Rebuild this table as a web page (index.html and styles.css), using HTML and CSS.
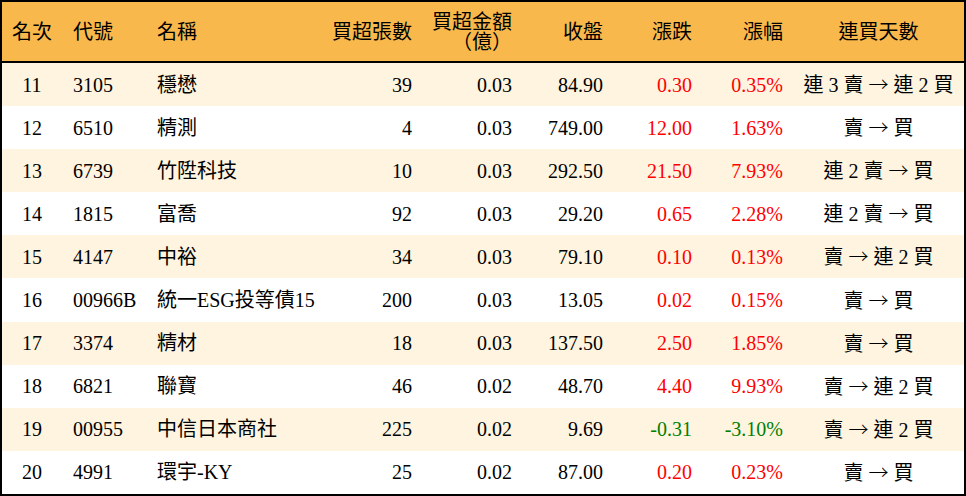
FILE: index.html
```html
<!DOCTYPE html>
<html lang="zh-Hant">
<head>
<meta charset="utf-8">
<title>買超排行</title>
<link rel="stylesheet" href="styles.css">
</head>
<body>
<div class="table">
  <div class="row head">
    <div class="c c1 center">名次</div>
    <div class="c c2">代號</div>
    <div class="c c3">名稱</div>
    <div class="c c4 right">買超張數</div>
    <div class="c c5 right two">買超金額<br>（億）</div>
    <div class="c c6 right">收盤</div>
    <div class="c c7 right">漲跌</div>
    <div class="c c8 right">漲幅</div>
    <div class="c c9 center">連買天數</div>
  </div>
  <div class="row alt">
    <div class="c c1 center">11</div><div class="c c2">3105</div><div class="c c3">穩懋</div>
    <div class="c c4 right">39</div><div class="c c5 right">0.03</div><div class="c c6 right">84.90</div>
    <div class="c c7 right up">0.30</div><div class="c c8 right up">0.35%</div><div class="c c9 center">連 3 賣 <span class="arr">→</span> 連 2 買</div>
  </div>
  <div class="row">
    <div class="c c1 center">12</div><div class="c c2">6510</div><div class="c c3">精測</div>
    <div class="c c4 right">4</div><div class="c c5 right">0.03</div><div class="c c6 right">749.00</div>
    <div class="c c7 right up">12.00</div><div class="c c8 right up">1.63%</div><div class="c c9 center">賣 <span class="arr">→</span> 買</div>
  </div>
  <div class="row alt">
    <div class="c c1 center">13</div><div class="c c2">6739</div><div class="c c3">竹陞科技</div>
    <div class="c c4 right">10</div><div class="c c5 right">0.03</div><div class="c c6 right">292.50</div>
    <div class="c c7 right up">21.50</div><div class="c c8 right up">7.93%</div><div class="c c9 center">連 2 賣 <span class="arr">→</span> 買</div>
  </div>
  <div class="row">
    <div class="c c1 center">14</div><div class="c c2">1815</div><div class="c c3">富喬</div>
    <div class="c c4 right">92</div><div class="c c5 right">0.03</div><div class="c c6 right">29.20</div>
    <div class="c c7 right up">0.65</div><div class="c c8 right up">2.28%</div><div class="c c9 center">連 2 賣 <span class="arr">→</span> 買</div>
  </div>
  <div class="row alt">
    <div class="c c1 center">15</div><div class="c c2">4147</div><div class="c c3">中裕</div>
    <div class="c c4 right">34</div><div class="c c5 right">0.03</div><div class="c c6 right">79.10</div>
    <div class="c c7 right up">0.10</div><div class="c c8 right up">0.13%</div><div class="c c9 center">賣 <span class="arr">→</span> 連 2 買</div>
  </div>
  <div class="row">
    <div class="c c1 center">16</div><div class="c c2">00966B</div><div class="c c3">統一ESG投等債15</div>
    <div class="c c4 right">200</div><div class="c c5 right">0.03</div><div class="c c6 right">13.05</div>
    <div class="c c7 right up">0.02</div><div class="c c8 right up">0.15%</div><div class="c c9 center">賣 <span class="arr">→</span> 買</div>
  </div>
  <div class="row alt">
    <div class="c c1 center">17</div><div class="c c2">3374</div><div class="c c3">精材</div>
    <div class="c c4 right">18</div><div class="c c5 right">0.03</div><div class="c c6 right">137.50</div>
    <div class="c c7 right up">2.50</div><div class="c c8 right up">1.85%</div><div class="c c9 center">賣 <span class="arr">→</span> 買</div>
  </div>
  <div class="row">
    <div class="c c1 center">18</div><div class="c c2">6821</div><div class="c c3">聯寶</div>
    <div class="c c4 right">46</div><div class="c c5 right">0.02</div><div class="c c6 right">48.70</div>
    <div class="c c7 right up">4.40</div><div class="c c8 right up">9.93%</div><div class="c c9 center">賣 <span class="arr">→</span> 連 2 買</div>
  </div>
  <div class="row alt">
    <div class="c c1 center">19</div><div class="c c2">00955</div><div class="c c3">中信日本商社</div>
    <div class="c c4 right">225</div><div class="c c5 right">0.02</div><div class="c c6 right">9.69</div>
    <div class="c c7 right down">-0.31</div><div class="c c8 right down">-3.10%</div><div class="c c9 center">賣 <span class="arr">→</span> 連 2 買</div>
  </div>
  <div class="row">
    <div class="c c1 center">20</div><div class="c c2">4991</div><div class="c c3">環宇-KY</div>
    <div class="c c4 right">25</div><div class="c c5 right">0.02</div><div class="c c6 right">87.00</div>
    <div class="c c7 right up">0.20</div><div class="c c8 right up">0.23%</div><div class="c c9 center">賣 <span class="arr">→</span> 買</div>
  </div>
</div>
</body>
</html>
```
FILE: styles.css
```css
html, body {
  margin: 0;
  padding: 0;
  background: #fff;
}
body {
  font-family: "Liberation Serif", "Noto Sans CJK TC", serif;
  font-size: 20px;
  color: #000;
}
.table {
  width: 966px;
  height: 496px;
  box-sizing: border-box;
  border: 2px solid #000;
  display: flex;
  flex-direction: column;
}
.row {
  display: grid;
  grid-template-columns: 60px 85px 173px 102px 100px 91px 89px 91px 171px;
  flex: 1;
  align-items: center;
  background: #fff;
}
.row.alt {
  background: #fef4e0;
}
.row.head {
  flex: 0 0 59px;
  background: #f9b84c;
  border-bottom: 2px solid #000;
}
.c {
  white-space: nowrap;
  line-height: 22px;
}
.head .two {
  line-height: 20px;
}
.c2 { padding-left: 11px; }
.c3 { padding-left: 10px; }
.right { text-align: right; padding-right: 10px; }
.center { text-align: center; }
.up { color: #ff0000; }
.down { color: #008000; }
.arr {
  font-family: "Noto Sans CJK TC", sans-serif;
  font-weight: 300;
}
```
